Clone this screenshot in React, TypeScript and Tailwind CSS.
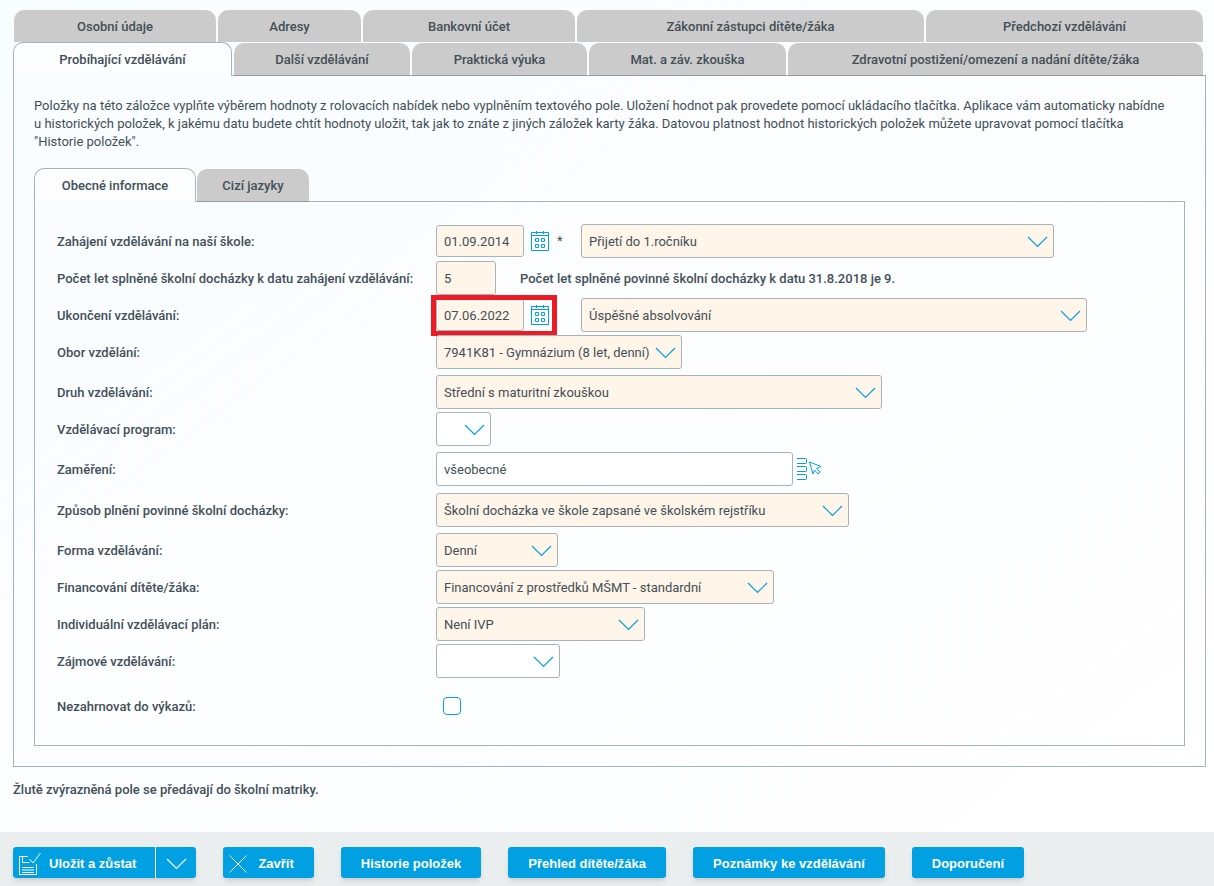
import { useState } from 'react';
import type { ReactNode } from 'react';
import clsx from 'clsx';

const TOP_TABS = ['Osobní údaje', 'Adresy', 'Bankovní účet', 'Zákonní zástupci dítěte/žáka', 'Předchozí vzdělávání'];
const BOTTOM_TABS = [
  'Probíhající vzdělávání',
  'Další vzdělávání',
  'Praktická výuka',
  'Mat. a záv. zkouška',
  'Zdravotní postižení/omezení a nadání dítěte/žáka',
];

function ChevronIcon({ className }: { className?: string }) {
  return (
    <svg className={className} width="21" height="12" viewBox="0 0 21 12" fill="none" stroke="currentColor" strokeWidth="1.2">
      <path d="M1 1l9.5 9.5L20 1" />
    </svg>
  );
}

function CalendarIcon() {
  return (
    <svg width="18" height="20" viewBox="0 0 18 20" fill="none" stroke="currentColor">
      <path d="M.5 1.5h17v18H.5zM.5 4.5h17M5.5 0v3M12.5 0v3" />
      <path d="M4.5 7.5h3v3h-3zM10.5 7.5h3v3h-3zM4.5 13.5h3v3h-3zM10.5 13.5h3v3h-3z" />
    </svg>
  );
}

function PickListIcon() {
  return (
    <svg width="25" height="23" viewBox="0 0 25 23" fill="none" stroke="currentColor">
      <path d="M0 .5h8.500a1 1 0 0 1 1 1v3a1 1 0 0 1-1 1H0M0 8.500h8.500a1 1 0 0 1 1 1v3a1 1 0 0 1-1 1H0M0 16.500h8.500a1 1 0 0 1 1 1v3a1 1 0 0 1-1 1H0" />
      <path d="M12.500 4l11.500 4.500-4.500 2 3.500 3.500-2 2-3.500-4-1.500 4z" strokeLinejoin="round" />
    </svg>
  );
}

function SaveIcon() {
  return (
    <svg width="22" height="24" viewBox="0 0 22 24" fill="none" stroke="currentColor">
      <path d="M9 4.500H.5v18h17V12" />
      <path d="M3.500 4.500v6h7M3 15.500h12M3 18h12M3 20.500h12M10.500 7l3.500 4L21.500 1" />
    </svg>
  );
}

function CloseIcon() {
  return (
    <svg width="18" height="18" viewBox="0 0 18 18" fill="none" stroke="currentColor">
      <path d="M.5.5l17 17M17.500.5l-17 17" />
    </svg>
  );
}

function Tab({ label, active, onClick, className }: { label: string; active?: boolean; onClick?: () => void; className?: string }) {
  return (
    <button
      type="button"
      role="tab"
      aria-selected={!!active}
      onClick={onClick}
      className={clsx(
        'rounded-t-[10px] text-center font-medium',
        active ? 'border border-b-0 border-[#a5b4bc] bg-[#fbfdff]' : 'bg-[#cbcbcb] pt-0.5',
        className,
      )}
    >
      {label}
    </button>
  );
}

function Select({ id, value, width, plain, label }: { id: string; value: string; width: string; plain?: boolean; label?: string }) {
  return (
    <div className={clsx('relative h-[34px]', width)}>
      <select
        id={id}
        aria-label={label}
        defaultValue={value}
        className={clsx(
          'h-full w-full appearance-none rounded-[3px] border border-[#a5b4bc] pl-[7px] pr-7 pt-0.5',
          plain ? 'bg-white' : 'bg-[#fff5e8]',
        )}
      >
        <option>{value}</option>
      </select>
      <ChevronIcon className="pointer-events-none absolute right-1.5 top-3 text-[#00a0e3]" />
    </div>
  );
}

function DateField({ id, value, marked }: { id: string; value: string; marked?: boolean }) {
  return (
    <div className="relative flex h-[34px] items-center gap-[7px]">
      <input id={id} defaultValue={value} className="h-8 w-[88px] rounded-[3px] border border-[#a5b4bc] bg-[#fff5e8] px-[7px]" />
      <button type="button" aria-label="Vybrat datum" className="text-[#00a0e3]">
        <CalendarIcon />
      </button>
      {marked && <div className="pointer-events-none absolute -top-[3px] -bottom-1 -left-[5px] -right-2 border-[5px] border-[#ed1c24]" />}
    </div>
  );
}

function Row({ id, label, className, children }: { id: string; label: string; className?: string; children: ReactNode }) {
  return (
    <div className={clsx('grid grid-cols-[379px_1fr] items-center', className)}>
      <label htmlFor={id} className="whitespace-nowrap pt-0.5 font-medium">{label}</label>
      <div className="flex items-center">{children}</div>
    </div>
  );
}

function ActionButton({ label, icon }: { label: string; icon?: ReactNode }) {
  return (
    <button
      type="button"
      className={clsx('flex h-[31px] items-center rounded-[3px] bg-[#00a0e3] pt-0.5 shadow-md', icon ? 'gap-[11px] pl-1.5 pr-5' : 'px-5')}
    >
      {icon}
      {label}
    </button>
  );
}

export default function App() {
  const [mainTab, setMainTab] = useState(0);
  const [innerTab, setInnerTab] = useState(0);

  return (
    <div className="flex min-h-screen flex-col bg-linear-to-br from-[#f8fdff] via-[#fcfdff] to-white font-[Roboto,sans-serif] text-[13px] leading-[18px] text-[#434f57]">
      <main className="flex-1 pb-8 pl-[13px] pr-2 pt-2.5">
        {/* Main tabs */}
        <div role="tablist">
          <div className="ml-px mr-[3px] grid grid-cols-[202fr_143fr_212fr_347fr_277fr] gap-0.5">
            {TOP_TABS.map((t) => (
              <Tab key={t} label={t} className="h-8" />
            ))}
          </div>
          <div className="relative z-10 -mb-px mr-[3px] grid grid-cols-[219fr_176fr_175fr_197fr_415fr] items-end gap-0.5">
            {BOTTOM_TABS.map((t, i) => (
              <Tab
                key={t}
                label={t}
                active={i === mainTab}
                onClick={() => setMainTab(i)}
                className={i === mainTab ? 'h-[34px]' : 'h-[33px] border-b border-[#999]'}
              />
            ))}
          </div>
        </div>

        <section className="border border-[#a5b4bc] px-5 pb-5 pt-[21px]">
          <p>
            Položky na této záložce vyplňte výběrem hodnoty z rolovacích nabídek nebo vyplněním textového pole. Uložení
            hodnot pak provedete pomocí ukládacího tlačítka. Aplikace vám automaticky nabídne u&nbsp;historických položek,
            k&nbsp;jakému datu budete chtít hodnoty uložit, tak jak to znáte z jiných záložek karty žáka. Datovou platnost
            hodnot historických položek můžete upravovat pomocí tlačítka "Historie&nbsp;položek".
          </p>

          {/* Inner tabs */}
          <div role="tablist" className="relative z-10 -mb-px mt-[17px] flex items-end gap-px">
            {['Obecné informace', 'Cizí jazyky'].map((t, i) => (
              <Tab
                key={t}
                label={t}
                active={i === innerTab}
                onClick={() => setInnerTab(i)}
                className={clsx(i === 0 ? 'w-[162px]' : 'w-28', i === innerTab ? 'h-[34px]' : 'h-[33px] border-b border-[#999]')}
              />
            ))}
          </div>

          <form className="flex flex-col gap-1.5 border border-[#a5b4bc] pb-[29px] pl-[22px] pr-5 pt-[22px]">
            <div className="flex flex-col gap-[3px]">
              <Row id="start" label="Zahájení vzdělávání na naší škole:">
                <DateField id="start" value="01.09.2014" />
                <span className="w-8 pl-2">*</span>
                <Select id="startKind" label="Způsob zahájení" value="Přijetí do 1.ročníku" width="w-[473px]" />
              </Row>
              <Row id="years" label="Počet let splněné školní docházky k datu zahájení vzdělávání:">
                <input id="years" defaultValue="5" className="h-[34px] w-[60px] rounded-[3px] border border-[#a5b4bc] bg-[#fff5e8] px-[7px]" />
                <span className="pl-6 pt-0.5 font-medium">Počet let splněné povinné školní docházky k datu 31.8.2018 je 9.</span>
              </Row>
              <Row id="end" label="Ukončení vzdělávání:">
                <DateField id="end" value="07.06.2022" marked />
                <span className="w-8" />
                <Select id="endKind" label="Způsob ukončení" value="Úspěšné absolvování" width="w-[506px]" />
              </Row>
              <Row id="field" label="Obor vzdělání:">
                <Select id="field" value="7941K81 - Gymnázium (8 let, denní)" width="w-[246px]" />
              </Row>
            </div>
            <div className="flex flex-col gap-[3px]">
              <Row id="kind" label="Druh vzdělávání:">
                <Select id="kind" value="Střední s maturitní zkouškou" width="w-[446px]" />
              </Row>
              <Row id="program" label="Vzdělávací program:">
                <Select id="program" value="" width="w-[55px]" plain />
              </Row>
            </div>
            <Row id="focus" label="Zaměření:" className="pb-px">
              <input id="focus" defaultValue="všeobecné" className="h-[34px] w-[357px] rounded-[3px] border border-[#a5b4bc] bg-white px-[7px]" />
              <button type="button" aria-label="Vybrat ze seznamu" className="ml-1 text-[#00a0e3]">
                <PickListIcon />
              </button>
            </Row>
            <Row id="attendance" label="Způsob plnění povinné školní docházky:">
              <Select id="attendance" value="Školní docházka ve škole zapsané ve školském rejstříku" width="w-[413px]" />
            </Row>
            <div className="flex flex-col gap-[3px]">
              <Row id="form" label="Forma vzdělávání:">
                <Select id="form" value="Denní" width="w-[122px]" />
              </Row>
              <Row id="funding" label="Financování dítěte/žáka:">
                <Select id="funding" value="Financování z prostředků MŠMT - standardní" width="w-[338px]" />
              </Row>
              <Row id="ivp" label="Individuální vzdělávací plán:">
                <Select id="ivp" value="Není IVP" width="w-[209px]" />
              </Row>
              <Row id="hobby" label="Zájmové vzdělávání:">
                <Select id="hobby" value="" width="w-[124px]" plain />
              </Row>
            </div>
            <Row id="exclude" label="Nezahrnovat do výkazů:" className="mt-3">
              <input id="exclude" type="checkbox" className="ml-[7px] size-[18px] appearance-none rounded-[4px] border border-[#00a0e3] bg-white checked:bg-[#00a0e3]" />
            </Row>
          </form>
        </section>

        <p className="mt-3.5 font-medium">Žlutě zvýrazněná pole se předávají do školní matriky.</p>
      </main>

      {/* Action bar */}
      <footer className="flex flex-wrap gap-x-[27px] gap-y-2 bg-[#eaeeef] px-[13px] pb-2 pt-[15px] font-['Liberation_Sans',sans-serif] text-[13px] font-bold text-white">
        <div className="flex h-[31px] gap-px rounded-[3px] bg-white shadow-md">
          <button type="button" className="flex items-center gap-2 rounded-l-[3px] bg-[#00a0e3] pl-1.5 pr-[19px] pt-0.5">
            <SaveIcon />
            Uložit a zůstat
          </button>
          <button type="button" aria-label="Další možnosti" className="flex w-10 items-center justify-center rounded-r-[3px] bg-[#00a0e3] pt-0.5">
            <ChevronIcon />
          </button>
        </div>
        <ActionButton label="Zavřít" icon={<CloseIcon />} />
        <ActionButton label="Historie položek" />
        <ActionButton label="Přehled dítěte/žáka" />
        <ActionButton label="Poznámky ke vzdělávání" />
        <ActionButton label="Doporučení" />
      </footer>
    </div>
  );
}
